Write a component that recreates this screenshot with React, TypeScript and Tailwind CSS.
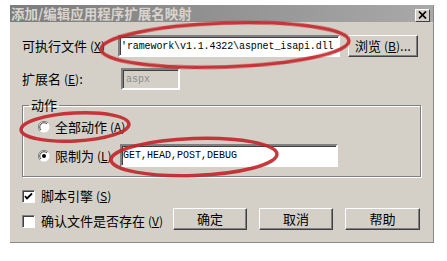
import React from "react";

const cjk = { fontFamily: '"Noto Sans CJK SC", "Liberation Sans", sans-serif' };
const mono = { fontFamily: '"Liberation Mono", "Noto Sans CJK SC", monospace' };

function Key({ k }: { k: string }) {
  return (
    <span className="text-[12px]">
      (<span className="underline">{k}</span>)
    </span>
  );
}

function Radio({ checked }: { checked?: boolean }) {
  return (
    <svg width="12" height="12" viewBox="0 0 12 12" className="shrink-0">
      <circle cx="6" cy="6" r="5.5" fill="#fff" />
      <path d="M10 2 A5.5 5.5 0 0 0 2 10" fill="none" stroke="#808080" strokeWidth="1" />
      <path d="M9 3 A4.2 4.2 0 0 0 3 9" fill="none" stroke="#404040" strokeWidth="1" />
      {checked && <circle cx="6" cy="6" r="2" fill="#000" />}
    </svg>
  );
}

function Check({ checked }: { checked?: boolean }) {
  return (
    <div className="w-[13px] h-[13px] shrink-0 bg-white border border-t-[#808080] border-l-[#808080] border-b-white border-r-white shadow-[inset_1px_1px_0_#404040] flex items-center justify-center">
      {checked && (
        <svg width="9" height="9" viewBox="0 0 9 9">
          <path d="M1 4 L3 6.5 L8 1.5" fill="none" stroke="#000" strokeWidth="1.8" />
        </svg>
      )}
    </div>
  );
}

function Btn({ children, className = "" }: { children: React.ReactNode; className?: string }) {
  return (
    <div
      className={`h-[22px] flex items-center justify-center bg-[#d4d0c8] border border-t-white border-l-white border-b-[#404040] border-r-[#404040] shadow-[inset_-1px_-1px_0_#808080] text-[13px] text-black ${className}`}
    >
      {children}
    </div>
  );
}

const sunken =
  "h-[22px] border-2 border-t-[#808080] border-l-[#808080] border-b-white border-r-white shadow-[inset_1px_1px_0_#404040] flex items-center";

export default function App() {
  return (
    <div className="relative w-[447px] h-[261px] bg-white overflow-hidden pl-[10px] pt-[5px]" style={cjk}>
      {/* dialog */}
      <div className="w-[424px] h-[238px] bg-[#d4d0c8] border-r border-b border-r-[#8a8a8a] border-b-[#8a8a8a] flex flex-col">
        {/* title bar */}
        <div className="h-[17px] flex items-center justify-between pl-[1px] pr-[3px] bg-gradient-to-r from-[#7c7c7c] to-[#a9a9a9]">
          <span className="text-[13.5px] font-bold leading-none text-[#d8d4cc]">添加/编辑应用程序扩展名映射</span>
          <div className="w-[15px] h-[13px] mt-[3px] bg-[#d4d0c8] border border-t-white border-l-white border-b-[#404040] border-r-[#404040] flex items-center justify-center">
            <svg width="9" height="8" viewBox="0 0 9 8">
              <path d="M1 0.5 L8 7.5 M8 0.5 L1 7.5" stroke="#000" strokeWidth="1.7" />
            </svg>
          </div>
        </div>

        <div className="flex flex-col pt-[13px] pl-[12px] pr-[13px] text-[13px] text-black">
          {/* executable */}
          <div className="flex items-center">
            <span className="w-[96px]">
              可执行文件 <Key k="X" />
            </span>
            <div className={`${sunken} w-[222px] bg-white pl-[1px] overflow-hidden`}>
              <span className="text-[10px] tracking-[-0.1px] whitespace-nowrap" style={mono}>
                'ramework\v1.1.4322\aspnet_isapi.dll
              </span>
            </div>
            <Btn className="ml-[8px] w-[70px]">
              <span>
                浏览 <Key k="B" />...
              </span>
            </Btn>
          </div>

          {/* extension */}
          <div className="flex items-center mt-[11px]">
            <span className="w-[99px]">
              扩展名 <Key k="E" />:
            </span>
            <div className={`${sunken} w-[59px] bg-[#d4d0c8] pl-[3px]`}>
              <span className="text-[10px] text-[#8c8c8c]" style={mono}>
                aspx
              </span>
            </div>
          </div>

          {/* action group */}
          <fieldset className="mt-[8px] w-[399px] h-[79px] border border-[#808080] shadow-[1px_1px_0_#fff,inset_1px_1px_0_#fff]">
            <legend className="ml-[6px] px-[2px] leading-[14px]">动作</legend>
            <div className="flex flex-col pl-[15px]">
              <div className="flex items-center gap-[5px] mt-[7px] h-[16px]">
                <Radio />
                <span>
                  全部动作 <Key k="A" />
                </span>
              </div>
              <div className="flex items-center mt-[9px]">
                <Radio checked />
                <span className="ml-[5px] w-[65px]">
                  限制为 <Key k="L" />
                </span>
                <div className={`${sunken} w-[218px] h-[23px] bg-white pl-[1px]`}>
                  <span className="text-[10px]" style={mono}>
                    GET,HEAD,POST,DEBUG
                  </span>
                </div>
              </div>
            </div>
          </fieldset>

          {/* bottom */}
          <div className="flex items-end mt-[12px]">
            <div className="w-[155px] flex flex-col gap-[11px]">
              <div className="flex items-center gap-[6px] h-[14px]">
                <Check checked />
                <span>
                  脚本引擎 <Key k="S" />
                </span>
              </div>
              <div className="flex items-center gap-[6px] h-[14px] mb-[2px]">
                <Check />
                <span>
                  确认文件是否存在 <Key k="V" />
                </span>
              </div>
            </div>
            <div className="flex gap-[12px]">
              <Btn className="w-[74px]">确定</Btn>
              <Btn className="w-[74px]">取消</Btn>
              <Btn className="w-[75px]">帮助</Btn>
            </div>
          </div>
        </div>
      </div>

      {/* red annotation marks */}
      <svg className="absolute inset-0 pointer-events-none" width="447" height="261" viewBox="0 0 447 261">
        <g fill="none" stroke="#c3272b" strokeWidth="3.5" opacity="0.92">
          <ellipse cx="225" cy="45" rx="124" ry="22" transform="rotate(-2 225 45)" />
          <ellipse cx="75" cy="127" rx="54" ry="14" transform="rotate(-3 75 127)" />
          <ellipse cx="194" cy="157" rx="83" ry="18.5" transform="rotate(-2 194 157)" />
        </g>
      </svg>
    </div>
  );
}
